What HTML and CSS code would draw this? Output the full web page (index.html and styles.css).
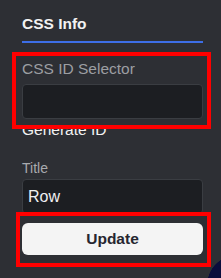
FILE: index.html
```html
<!DOCTYPE html>
<html lang="en">
<head>
    <meta charset="UTF-8">
    <meta name="viewport" content="width=device-width, initial-scale=1.0">
    <title>CSS Info</title>
    <link rel="stylesheet" href="styles.css">
</head>
<body>
    <div class="sidebar">
        <h2 class="sidebar-title">CSS Info</h2>

        <label class="field-label" for="cssId">CSS ID Selector</label>
        <input type="text" id="cssId" class="field-input">
        <div class="generate-link">Generate ID</div>

        <label class="field-label small" for="title">Title</label>
        <input type="text" id="title" class="field-input title-input" value="Row">

        <button class="update-btn">Update</button>
    </div>

    <!-- annotation boxes -->
    <div class="highlight highlight-id"></div>
    <div class="highlight highlight-update"></div>

    <div class="fab"></div>
</body>
</html>
```

FILE: styles.css
```css
html, body {
    margin: 0;
    height: 100%;
    overflow: hidden;
}
body {
    font-family: "Liberation Sans", Arial, sans-serif;
    background-color: #2d2f34;
    color: #f0f0f0;
    position: relative;
}
.sidebar {
    padding: 15px 18px 0 22px;
}
.sidebar-title {
    margin: 0;
    font-size: 15.5px;
    font-weight: bold;
    line-height: 18px;
    padding-bottom: 8px;
    border-bottom: 2px solid #3d6ee6;
    color: #f2f2f2;
}
.field-label {
    display: block;
    margin-top: 17px;
    font-size: 15.5px;
    line-height: 18px;
    color: #9c9ea2;
}
.field-label.small {
    margin-top: 21px;
    font-size: 14px;
    line-height: 16px;
    color: #a8aaae;
}
.field-input {
    display: block;
    box-sizing: border-box;
    width: 100%;
    height: 35px;
    margin: 6px 0 0;
    padding: 0 5px;
    background-color: #1c1e22;
    border: 1px solid #3a3d42;
    border-radius: 4px;
    color: #f0f0f0;
    font-family: "Liberation Sans", Arial, sans-serif;
    font-size: 16px;
    outline: none;
}
.title-input {
    margin-top: 3px;
}
.generate-link {
    margin-top: 2px;
    font-size: 15.5px;
    line-height: 18px;
    color: #f2f2f2;
}
.update-btn {
    display: block;
    width: 100%;
    height: 32px;
    margin-top: 9px;
    border: none;
    border-radius: 6px;
    background-color: #f4f4f4;
    color: #26262f;
    font-family: "Liberation Sans", Arial, sans-serif;
    font-size: 15.5px;
    font-weight: bold;
    cursor: pointer;
}
.highlight {
    position: absolute;
    box-sizing: border-box;
    border: 4px solid #ff0000;
}
.highlight-id {
    left: 12px;
    top: 52px;
    width: 199px;
    height: 77px;
}
.highlight-update {
    left: 16px;
    top: 212px;
    width: 195px;
    height: 55px;
}
/* corner of the floating button peeking in */
.fab {
    position: absolute;
    right: 0;
    bottom: 0;
    width: 14px;
    height: 23px;
    background: radial-gradient(circle at 30px 30px, #0a0d3c 29.5px, transparent 30px);
}
```
